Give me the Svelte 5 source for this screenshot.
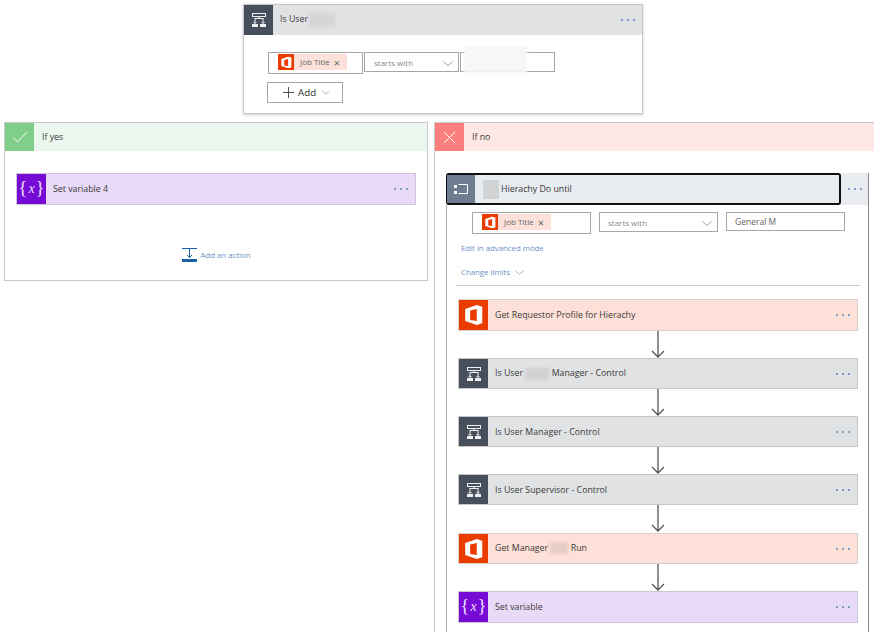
<script>
const steps = [
    { kind: "office", label: "Get Requestor Profile for Hierachy" },
    { kind: "control", label: "Is User", blur: 24, rest: "Manager - Control" },
    { kind: "control", label: "Is User Manager - Control" },
    { kind: "control", label: "Is User Supervisor - Control" },
    { kind: "office", label: "Get Manager", blur: 18, rest: "Run" },
    { kind: "variable", label: "Set variable" },
];
</script>

{#snippet controlIcon()}
    <svg width="18" height="18" viewBox="0 0 18 18" fill="none" stroke="#eef0f2" stroke-width="1">
        <rect x="2.500" y="2.500" width="13" height="3" />
        <path d="M9 5.500v2M4.500 7.500h9M5 7.500v5M13 7.500v5M3.500 11l1.500 1.500L6.500 11M11.500 11l1.500 1.500 1.500-1.500" />
        <rect x="2" y="13" width="6" height="3" fill="#eef0f2" stroke="none" />
        <rect x="10" y="13" width="6" height="3" fill="#eef0f2" stroke="none" />
    </svg>
{/snippet}

{#snippet officeIcon(size)}
    <svg width={size} height={size} viewBox="0 0 20 20">
        <path fill="#fff" fill-rule="evenodd" d="M2 4.500 12.500 1 17.500 2.400v15.200L12.500 19 2 15.500zM6.500 6v8.500l6 1V4.500z" />
    </svg>
{/snippet}

{#snippet dots()}
    <span class="dots"><i></i><i></i><i></i></span>
{/snippet}

{#snippet chevron()}
    <svg class="chev" width="10" height="5" viewBox="0 0 10 5" fill="none" stroke="#a0a0a0"><path d="M.5.500l4.500 4 4.500-4" /></svg>
{/snippet}

{#snippet chip()}
    <span class="chip">
        <span class="chip-icon">{@render officeIcon(13)}</span>
        <span class="chip-text">Job Title</span>
        <span class="chip-x">×</span>
    </span>
{/snippet}

{#snippet card(step)}
    <div class="card {step.kind}">
        <span class="icon">
            {#if step.kind === "office"}
                {@render officeIcon(22)}
            {:else if step.kind === "control"}
                {@render controlIcon()}
            {:else}
                <span class="var">{"{"}<em>x</em>{"}"}</span>
            {/if}
        </span>
        <span class="title">
            {step.label}
            {#if step.blur}
                <span class="smudge" style="width: {step.blur}px"></span>
                {step.rest}
            {/if}
        </span>
        {@render dots()}
    </div>
{/snippet}

<div class="page">
    <section class="top">
        <header class="top-head">
            <span class="icon">{@render controlIcon()}</span>
            <span class="title">Is User<span class="smudge light"></span></span>
            {@render dots()}
        </header>
        <div class="top-body">
            <div class="row">
                <div class="field w95 tall">{@render chip()}</div>
                <div class="field w95 op">starts with {@render chevron()}</div>
                <div class="field w95 val"><span class="whiteout"></span></div>
            </div>
            <button class="add">
                <svg width="13" height="13" viewBox="0 0 13 13" stroke="#555"><path d="M6.500 1v11M1 6.500h11" /></svg>
                Add
                {@render chevron()}
            </button>
        </div>
    </section>

    <div class="branches">
        <section class="branch yes">
            <header class="branch-head">
                <span class="branch-icon">
                    <svg width="16" height="12" viewBox="0 0 16 12" fill="none" stroke="#fff"><path d="M1 6.500l4.500 4.500L15 1" /></svg>
                </span>
                If yes
            </header>
            <div class="yes-body">
                {@render card({ kind: "variable", label: "Set variable 4" })}
                <div class="add-action">
                    <svg width="15" height="14" viewBox="0 0 15 14" fill="none" stroke="#1b5fa8">
                        <path d="M0 .500h15M7.500.500v9M5 7l2.500 2.500L10 7" />
                        <rect x="0" y="11" width="15" height="3" fill="#1b5fa8" stroke="none" />
                    </svg>
                    Add an action
                </div>
            </div>
        </section>

        <section class="branch no">
            <header class="branch-head">
                <span class="branch-icon">
                    <svg width="13" height="13" viewBox="0 0 13 13" stroke="#fff"><path d="M1 1l11 11M12 1L1 12" /></svg>
                </span>
                If no
            </header>
            <div class="loop">
                <div class="loop-head">
                    <div class="loop-title">
                        <span class="icon">
                            <svg width="16" height="12" viewBox="0 0 16 12" fill="none" stroke="#fff">
                                <path d="M5.500 1.500h9v9h-9" />
                                <rect x="1" y="2" width="3" height="3" fill="#fff" stroke="none" />
                                <rect x="1" y="8" width="3" height="3" fill="#fff" stroke="none" />
                            </svg>
                        </span>
                        <span class="patch"></span>
                        Hierachy Do until
                    </div>
                    {@render dots()}
                </div>
                <div class="loop-body">
                    <div class="row wide">
                        <div class="field w119 tall">{@render chip()}</div>
                        <div class="field w119 op">starts with {@render chevron()}</div>
                        <div class="field w119 short">General M</div>
                    </div>
                    <div class="link first">Edit in advanced mode</div>
                    <div class="link second">Change limits <svg width="9" height="5" viewBox="0 0 10 5" fill="none" stroke="#9aa8c8"><path d="M.5.500l4.500 4 4.500-4" /></svg></div>
                    <hr />
                    <div class="steps">
                        {#each steps as step, i}
                            {#if i > 0}
                                <svg class="arrow" width="14" height="27" viewBox="0 0 14 27" fill="none" stroke="#555" stroke-width="1.300">
                                    <path d="M7 0v26M1 20l6 6 6-6" />
                                </svg>
                            {/if}
                            {@render card(step)}
                        {/each}
                    </div>
                </div>
            </div>
        </section>
    </div>
</div>

<style>
:global(body) { margin: 0; background: #fff; overflow: hidden; }
.page { width: 874px; height: 632px; overflow: hidden; padding-top: 4px; box-sizing: border-box; font-family: "Open Sans", "Noto Sans", sans-serif; font-size: 8.800px; color: #3a3a3a; }

.top { width: 400px; height: 110px; margin-left: 243px; box-sizing: border-box; border: 1px solid #c8c8c8; box-shadow: 0 1px 3px rgba(0,0,0,.2); }
.top-head { display: flex; align-items: center; height: 30px; background: #e0e2e4; }
.top-head .icon { width: 29px; height: 30px; background: #474f5c; display: flex; align-items: center; justify-content: center; }
.top-head .title { margin-left: 7px; flex: 1; }
.top-body { padding: 17px 0 0 23px; }
.row { display: flex; gap: 1px; align-items: flex-start; }
.row.wide { gap: 8px; margin-left: 25px; }
.field { box-sizing: border-box; border: 1px solid #a6a6a6; height: 20px; display: flex; align-items: center; position: relative; font-size: 8px; color: #8a8a8a; }
.field.tall { height: 22px; padding: 1px 0 0 9px; align-items: flex-start; }
.field.op { padding-left: 9px; }
.field .chev { position: absolute; right: 5px; top: 8px; }
.w95 { width: 95px; }
.w119 { width: 119px; }
.w119.op { padding-left: 8px; }
.short { height: 19px; padding-left: 8px; font-size: 8.500px; color: #666; }
.row:not(.wide) .field.tall { margin-left: 1px; }
.val { overflow: visible; }
.whiteout { position: absolute; left: 3px; top: -7px; width: 63px; height: 27px; background: #f7f7f7; filter: blur(1px); }
.chip { display: flex; align-items: center; height: 16px; background: #fbe1da; width: 69px; color: #666; }
.chip-icon { width: 16px; height: 16px; background: #eb3c00; display: flex; align-items: center; justify-content: center; flex: none; }
.chip-text { margin: -1px 0 0 6px; font-size: 8px; }
.chip-x { margin-left: 4px; font-size: 11px; line-height: 1; }
.add { display: flex; align-items: center; gap: 3px; box-sizing: border-box; width: 76px; height: 21px; margin-top: 8px; padding: 0 0 0 14px; border: 1px solid #a6a6a6; background: #fff; font: 400 9.800px "Open Sans", sans-serif; color: #333; }
.add .chev { margin-left: 3px; width: 8px; }

.branches { display: flex; gap: 6px; margin: 8px 0 0 4px; }
.branch { box-sizing: border-box; border: 1px solid #c8c8c8; }
.yes { width: 424px; height: 159px; }
.no { width: 500px; height: 600px; border-right: none; border-bottom: none; }
.branch-head { display: flex; align-items: center; gap: 8px; height: 28px; padding-bottom: 1px; box-sizing: border-box; }
.yes .branch-head { background: #ebf6ee; }
.no .branch-head { background: #fde7e5; }
.branch-icon { width: 29px; height: 28px; margin-bottom: -1px; display: flex; align-items: center; justify-content: center; }
.yes .branch-icon { background: #7fcf88; }
.no .branch-icon { background: #fb7f7c; }
.yes-body { padding: 22px 11px 0; }
.add-action { display: flex; align-items: center; justify-content: center; gap: 4px; margin-top: 43px; font-size: 7.800px; color: #6e90c4; }

.card { box-sizing: border-box; display: flex; align-items: center; width: 400px; height: 32px; border: 1px solid #c6c6c6; }
.card .icon { width: 29px; height: 100%; display: flex; align-items: center; justify-content: center; flex: none; }
.card .title { margin: -1px 0 0 7px; flex: 1; color: #3a3a3a; }
.office { background: #fde0d7; border-color: #d9d0cc; }
.office:not(:first-child) { height: 31px; margin-top: 1px; }
.office .icon { background: #eb3c00; }
.control { background: #e0e2e4; height: 31px; }
.control .title { margin-top: 0; }
.control .icon { background: #474f5c; }
.variable { background: #e9daf7; border-color: #cdc4d8; }
.variable .icon { background: #770bd6; }
.var { color: #ecdcfb; font: 19px "Liberation Serif", serif; display: flex; align-items: center; margin-top: -2px; }
.var em { font-size: 14px; margin: 1px 1px 0; }
.smudge { display: inline-block; width: 24px; height: 12px; vertical-align: middle; background: #d0d2d4; filter: blur(1.500px); }
.smudge.light { width: 26px; height: 14px; margin-left: 1px; background: #d4d6d8; }
.office .smudge { background: #e6cdc6; }

.dots { display: flex; gap: 4px; margin-right: 7px; flex: none; }
.dots i { width: 2px; height: 2px; background: #7f9bc8; }

.loop { width: 423px; height: 500px; margin: 22px 0 0 11px; box-sizing: border-box; border-right: 1px solid #8a8a8a; border-left: 1px solid #b0b0b0; }
.loop-head { display: flex; align-items: center; margin-left: -1px; height: 32px; background: #e8ebef; }
.loop-head .dots { margin: 0 6px 0 7px; }
.loop-title { box-sizing: border-box; display: flex; align-items: center; width: 395px; height: 32px; background: #e8ebef; border: 2px solid #111; border-radius: 3px; }
.loop-title .icon { width: 28px; height: 100%; margin-left: -1px; background: #6e7c90; display: flex; align-items: center; justify-content: center; }
.patch { width: 16px; height: 19px; margin: 0 2px 0 8px; background: #d2d3d5; }
.loop-body { padding-top: 7px; }
.link { font-size: 7.800px; color: #6e90c4; margin-left: 14px; display: flex; align-items: center; gap: 5px; }
.link.first { margin-top: 9px; }
.link.second { margin-top: 14px; }
hr { border: none; border-top: 1px solid #c8c8c8; margin: 8px 8px 0 9px; }
.steps { display: flex; flex-direction: column; align-items: center; margin: 13px 0 0 1px; }
.arrow { display: block; }
</style>
